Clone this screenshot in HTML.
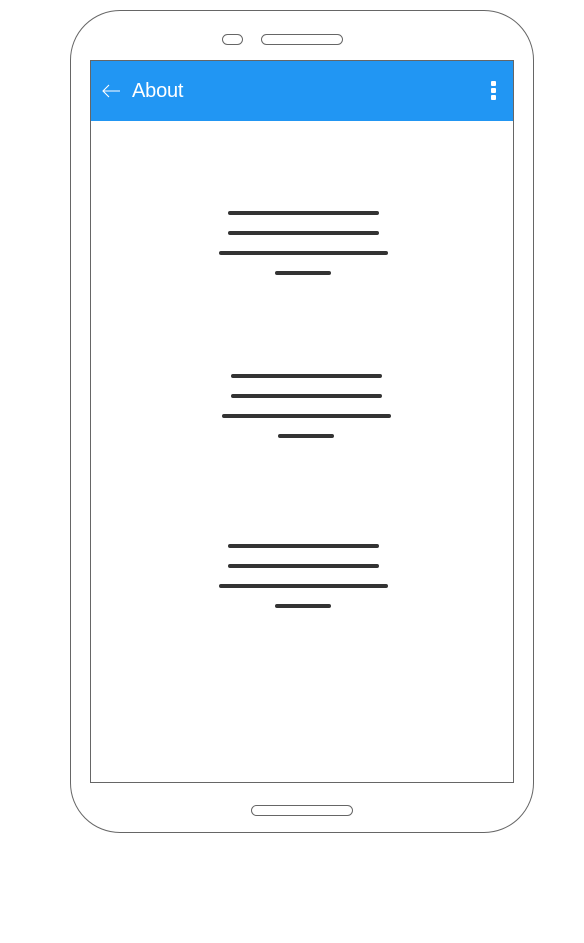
<!DOCTYPE html>
<html><head><meta charset="utf-8"><style>
*{margin:0;padding:0;box-sizing:border-box}
body{width:584px;height:943px;background:#fff;position:relative;overflow:hidden;font-family:"Liberation Sans",sans-serif}
.a{position:absolute}
.phone{left:70px;top:10px;width:464px;height:823px;border:1px solid #666;border-radius:50px}
.pill{border:1px solid #666;border-radius:6px;height:11px}
.screen{left:90px;top:60px;width:424px;height:723px;border:1px solid #666;background:#fff}
.bar{left:91px;top:61px;width:422px;height:60px;background:#2196F3}
.title{left:132px;top:80px;color:#fff;font-size:20px;letter-spacing:-0.2px}
.dot{left:491px;width:5px;height:5px;background:#fff;border-radius:1px}
.l{height:4px;background:#333;border-radius:2px}
</style></head><body>
<div class="a phone"></div>
<div class="a pill" style="left:222px;top:34px;width:21px"></div>
<div class="a pill" style="left:261px;top:34px;width:82px"></div>
<div class="a pill" style="left:251px;top:805px;width:102px"></div>
<div class="a screen"></div>
<div class="a bar"></div>
<svg class="a" style="left:101px;top:83px" width="20" height="16" viewBox="0 0 20 16"><path d="M19 8H2M8 2L2 8l6 6" fill="none" stroke="#fff" stroke-width="1.1"/></svg>
<div class="a title">About</div>
<div class="a dot" style="top:81px"></div>
<div class="a dot" style="top:88px"></div>
<div class="a dot" style="top:95px"></div>

<div class="a l" style="left:228px;top:211px;width:151px"></div>
<div class="a l" style="left:228px;top:231px;width:151px"></div>
<div class="a l" style="left:219px;top:251px;width:169px"></div>
<div class="a l" style="left:275px;top:271px;width:56px"></div>

<div class="a l" style="left:231px;top:374px;width:151px"></div>
<div class="a l" style="left:231px;top:394px;width:151px"></div>
<div class="a l" style="left:222px;top:414px;width:169px"></div>
<div class="a l" style="left:278px;top:434px;width:56px"></div>

<div class="a l" style="left:228px;top:544px;width:151px"></div>
<div class="a l" style="left:228px;top:564px;width:151px"></div>
<div class="a l" style="left:219px;top:584px;width:169px"></div>
<div class="a l" style="left:275px;top:604px;width:56px"></div>
</body></html>
